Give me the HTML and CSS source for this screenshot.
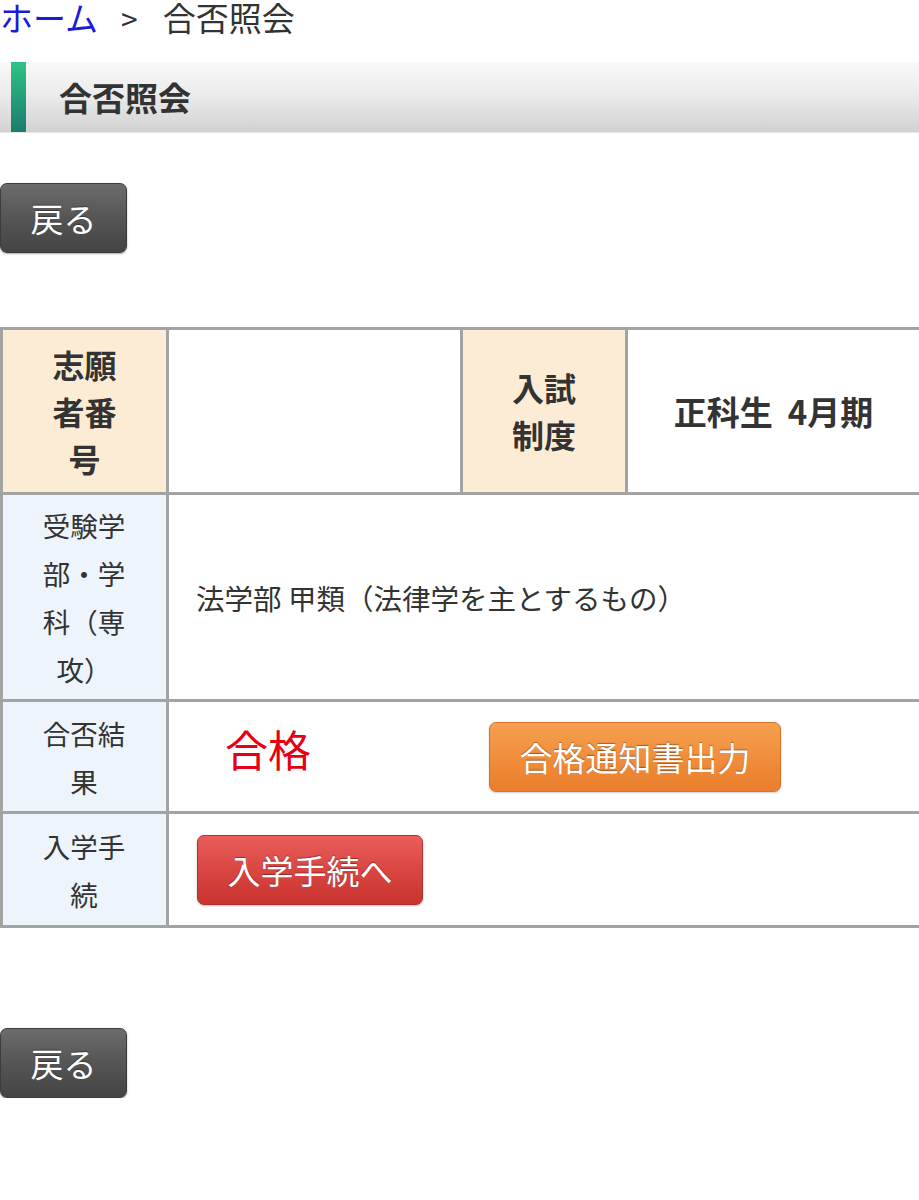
FILE: index.html
```html
<!DOCTYPE html>
<html lang="ja">
<head>
<meta charset="utf-8">
<title>合否照会</title>
<link rel="stylesheet" href="styles.css">
</head>
<body>
<div class="breadcrumb"><a class="home" href="#">ホーム</a><span class="sep">&gt;</span><span class="current">合否照会</span></div>
<div class="page-title"><span class="stripe"></span><h1>合否照会</h1></div>
<div class="back-wrap"><button class="btn btn-back">戻る</button></div>
<table class="result">
  <colgroup><col class="c1"><col class="c2"><col class="c3"><col class="c4"></colgroup>
  <tr class="r1">
    <th class="th-warm">志願者番号</th>
    <td></td>
    <th class="th-warm">入試制度</th>
    <td class="system">正科生&nbsp; 4月期</td>
  </tr>
  <tr class="r2">
    <th class="th-cool">受験学部・学科（専攻）</th>
    <td colspan="3" class="dept">法学部 甲類（法律学を主とするもの）</td>
  </tr>
  <tr class="r3">
    <th class="th-cool">合否結果</th>
    <td colspan="3"><div class="result-row"><span class="pass">合格</span><button class="btn btn-orange">合格通知書出力</button></div></td>
  </tr>
  <tr class="r4">
    <th class="th-cool">入学手続</th>
    <td colspan="3" class="proc"><button class="btn btn-red">入学手続へ</button></td>
  </tr>
</table>
<div class="back-wrap bottom"><button class="btn btn-back">戻る</button></div>
</body>
</html>
```
FILE: styles.css
```css
html, body {
  margin: 0;
  padding: 0;
  background: #fff;
}
body {
  font-family: "Noto Sans CJK JP", "Noto Sans", sans-serif;
  color: #333;
  width: 919px;
}
.breadcrumb {
  font-size: 33px;
  line-height: 34px;
  height: 34px;
  white-space: nowrap;
}
.home {
  color: #1b1bd8;
  text-decoration: none;
}
.sep {
  margin: 0 25px 0 23px;
  color: #333;
  font-size: 30px;
}
.current {
  color: #333;
}
.page-title {
  margin-top: 28px;
  height: 70px;
  display: flex;
  align-items: stretch;
  background: linear-gradient(to bottom, #f9f9f9 0%, #ececec 45%, #d2d2d2 100%);
  box-shadow: 0 1px 0 #e6e6e6;
}
.stripe {
  width: 15px;
  margin-left: 11px;
  background: linear-gradient(to bottom, #2fc486 0%, #22a07a 50%, #1b7c6c 100%);
}
.page-title h1 {
  margin: 0 0 0 33px;
  font-size: 33px;
  font-weight: bold;
  color: #333;
  align-self: center;
  line-height: 40px;
}
.back-wrap {
  margin-top: 51px;
  height: 70px;
}
.back-wrap.bottom {
  margin-top: 100px;
}
.btn {
  font-family: "Noto Sans CJK JP", "Noto Sans", sans-serif;
  font-size: 33px;
  color: #fff;
  height: 70px;
  border-radius: 7px;
  padding: 0;
  cursor: pointer;
  text-shadow: 0 -1px 1px rgba(0,0,0,0.35);
  line-height: 66px;
}
.btn-back {
  width: 127px;
  background: linear-gradient(to bottom, #6c6c6c 0%, #555 50%, #444 100%);
  border: 1px solid #3c3c3c;
  box-shadow: 0 1px 2px rgba(0,0,0,0.35);
}
.result {
  margin-top: 74px;
  width: 919px;
  table-layout: fixed;
  border-collapse: collapse;
}
.c1 { width: 166px; }
.c2 { width: 294px; }
.c3 { width: 165px; }
.c4 { width: 294px; }
.result th, .result td {
  border: 3px solid #a3a3a3;
  padding: 0;
}
.result th {
  text-align: center;
  vertical-align: middle;
}
.result .th-warm {
  background: #fdecd5;
  font-size: 32px;
  font-weight: bold;
  line-height: 47px;
  padding: 0 36px;
  color: #333;
}
.r1 th, .r1 td { height: 162px; }
.r2 th, .r2 td { height: 204px; }
.r3 th, .r3 td { height: 109px; }
.r4 th, .r4 td { height: 111px; }
.result .th-cool {
  background: #edf4fc;
  font-size: 27.5px;
  font-weight: normal;
  line-height: 48px;
  padding: 0 38px 0 37px;
  color: #333;
}
.system {
  text-align: center;
  font-size: 33px;
  font-weight: bold;
  color: #333;
}
.result .dept {
  font-size: 28.5px;
  padding-left: 27px;
  color: #333;
}
.result-row {
  display: flex;
  align-items: center;
  padding-left: 56px;
}
.pass {
  color: #e60012;
  font-size: 43px;
  width: 264px;
  flex: none;
  margin-bottom: 18px;
  line-height: 50px;
}
.btn-orange {
  width: 292px;
  background: linear-gradient(to bottom, #f5a050 0%, #f08c3a 55%, #ea7e2c 100%);
  border: 1px solid #d8712a;
  box-shadow: 0 1px 2px rgba(0,0,0,0.2);
}
.result .proc {
  padding-left: 28px;
}
.btn-red {
  width: 226px;
  background: linear-gradient(to bottom, #e95d5b 0%, #d84440 55%, #c8332f 100%);
  border: 1px solid #b3302c;
  box-shadow: 0 1px 2px rgba(0,0,0,0.25);
}
```
